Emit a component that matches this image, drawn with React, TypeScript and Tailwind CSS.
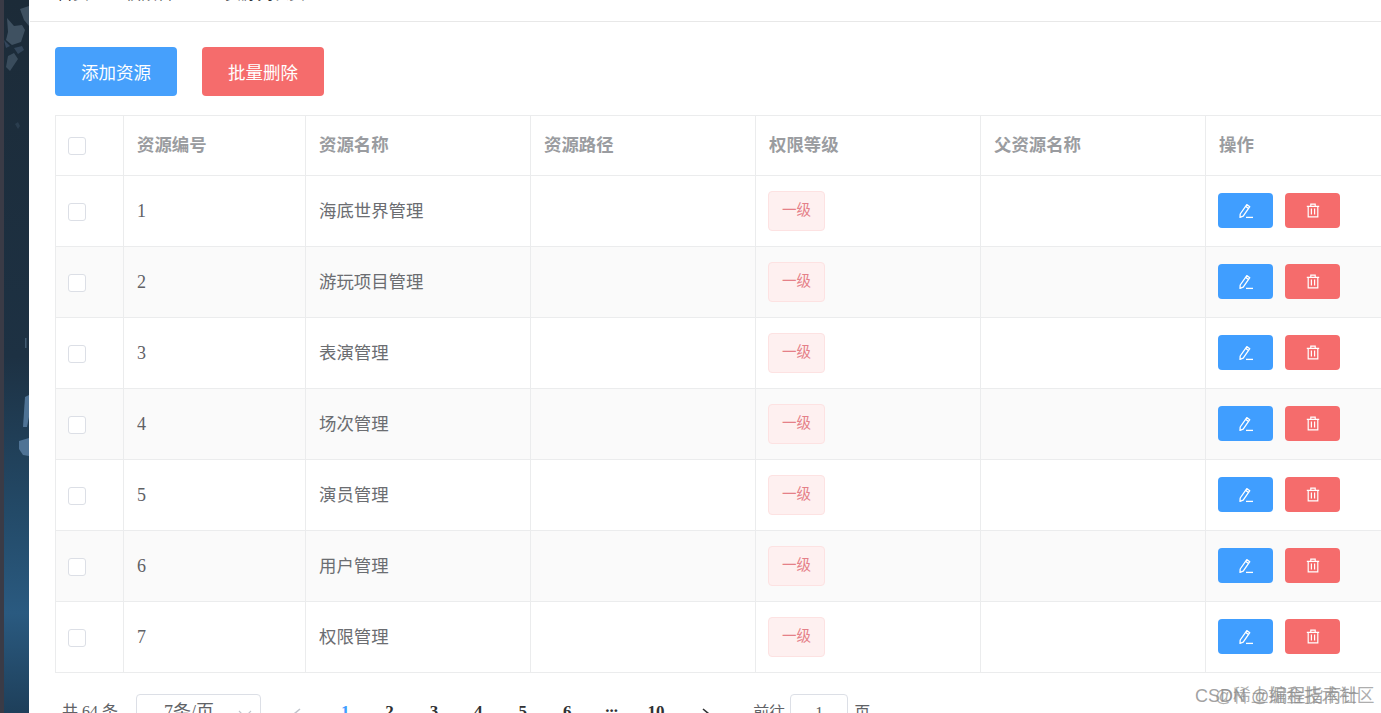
import React from "react";

const CJK = "font-['Liberation_Serif','Noto_Sans_CJK_SC',serif]";
const rows = [
  [1, "海底世界管理"],
  [2, "游玩项目管理"],
  [3, "表演管理"],
  [4, "场次管理"],
  [5, "演员管理"],
  [6, "用户管理"],
  [7, "权限管理"],
] as const;

const cols = ["w-[68px]", "w-[182px]", "w-[225px]", "w-[225px]", "w-[225px]", "w-[225px]", "w-[176px]"];

function Check() {
  return <span className="block w-[18px] h-[18px] rounded-[3px] border border-[#dcdfe6] bg-white" />;
}

function Edit() {
  return (
    <svg width="16" height="16" viewBox="0 0 16 16" fill="none" stroke="#fff" strokeWidth="1.3">
      <path d="M2.2 11 8.8 1.6l3 2.1-6.6 9.5-3.2 1.2z" strokeLinejoin="round" />
      <path d="M7.6 3.4l3 2.1" />
      <path d="M8 14.4h7" />
    </svg>
  );
}

function Trash() {
  return (
    <svg width="14" height="15" viewBox="0 0 14 15" fill="none" stroke="#fff" strokeWidth="1.2">
      <path d="M.8 3.4h12.4M4.8 3.4V1.2h4.4v2.2M2.2 3.4v10.4h9.6V3.4M5.4 5.6v6M8.6 5.6v6" />
    </svg>
  );
}

function Row({ n, name, odd }: { n: number; name: string; odd: boolean }) {
  const cell = "h-full border-r border-[#ebeced] flex items-center shrink-0";
  return (
    <div className={`flex h-[71px] border-b border-[#ebeced] ${odd ? "bg-white" : "bg-[#fafafa]"}`}>
      <div className={`${cell} ${cols[0]} pl-3 pt-px`}><Check /></div>
      <div className={`${cell} ${cols[1]} pl-[13px] text-[#5f6165] text-[18px]`}>{n}</div>
      <div className={`${cell} ${cols[2]} pl-[13px] text-[#6b6d71]`}>{name}</div>
      <div className={`${cell} ${cols[3]}`} />
      <div className={`${cell} ${cols[4]} pl-3`}>
        <span className="w-[57px] h-10 rounded border border-[#fde2e2] bg-[#fef0f0] text-[#e58088] text-[14.5px] flex items-center justify-center">一级</span>
      </div>
      <div className={`${cell} ${cols[5]}`} />
      <div className={`h-full ${cols[6]} shrink-0 pl-3 pb-px flex items-center gap-3`}>
        <span className="w-[55px] h-[35px] rounded bg-[#409eff] flex items-center justify-center"><Edit /></span>
        <span className="w-[55px] h-[35px] rounded bg-[#f56c6c] flex items-center justify-center"><Trash /></span>
      </div>
    </div>
  );
}

function Strip() {
  return (
    <div className="w-[29px] shrink-0 h-full flex">
      <div className="w-1 h-full bg-[#3a3b46]" />
      <svg className="flex-1 h-full" viewBox="0 0 25 713" preserveAspectRatio="none">
        <defs>
          <linearGradient id="g" x1="0" y1="0" x2="0" y2="1">
            <stop offset="0" stopColor="#1c2b38" />
            <stop offset="0.5" stopColor="#1d3143" />
            <stop offset="0.72" stopColor="#234a68" />
            <stop offset="0.86" stopColor="#2a5a80" />
            <stop offset="1" stopColor="#1e3f5a" />
          </linearGradient>
        </defs>
        <rect width="25" height="713" fill="url(#g)" />
        <path d="M16 9l9 -3v20l-5 -6z" fill="#3f5161" />
        <path d="M3 18l7 8 8 -1 3 5 -4 12 -9 3 -6 -5 2 -8z" fill="#3f5161" />
        <path d="M0 40l6 6 -4 2z" fill="#33455a" />
        <path d="M4 56l6 -3 4 6 -8 12 -4 -4z" fill="#3a4c5c" />
        <path d="M10 48l8 -2 2 4 -6 4z" fill="#33465a" />
        <path d="M11 124l3 -2 2 4 -2 3z" fill="#2a3d4e" />
        <path d="M21 397l4 -2v22l-2 10h-4z" fill="#4f7395" />
        <path d="M15 441l10 -3v18l-6 -1 -4 -6z" fill="#4f7395" />
        <path d="M21 338h1.5v10h-1.5z" fill="#415a70" />
      </svg>
    </div>
  );
}

export default function App() {
  return (
    <div className={`w-[1381px] h-[713px] overflow-hidden flex bg-white ${CJK} relative`}>
      <Strip />
      <main className="flex-1 min-w-0 h-full overflow-hidden">
        <div className="h-[22px] border-b border-[#e8e8e8] ml-px pl-[27px] flex items-end text-[16px] text-[#303133] overflow-hidden">
          <span className="mb-[15px] whitespace-nowrap flex">
            <span>首页</span>
            <span className="ml-[36px]">权限管理</span>
            <span className="ml-[36px]">资源列表页</span>
          </span>
        </div>
        <div className="pl-[26px] pt-[25px]">
          <div className="flex gap-[25px] font-['Noto_Sans_CJK_SC','Liberation_Sans',sans-serif] text-[17.5px] text-white">
            <button className="w-[122px] h-[49px] rounded bg-[#46a0fc] pt-px">添加资源</button>
            <button className="w-[122px] h-[49px] rounded bg-[#f56c6c] pt-px">批量删除</button>
          </div>
          <div className="mt-[19px] w-[1400px] border-l border-t border-[#ebeced] text-[17.4px]">
            <div className="flex h-[60px] border-b border-[#ebeced] text-[#9a9ca0] font-bold">
              {["", "资源编号", "资源名称", "资源路径", "权限等级", "父资源名称", "操作"].map((t, i) => (
                <div key={i} className={`${cols[i]} shrink-0 h-full flex items-center ${i === 0 ? "pl-3" : "pl-[13px]"} ${i < 6 ? "border-r border-[#ebeced]" : ""}`}>
                  {i === 0 ? <Check /> : t}
                </div>
              ))}
            </div>
            {rows.map(([n, name], i) => <Row key={n} n={n} name={name} odd={i % 2 === 0} />)}
          </div>
          <div className="mt-[21px] h-10 flex items-center text-[16px] text-[#606266] whitespace-nowrap">
            <span className="ml-[7px] w-[74px] mb-1">共 64 条</span>
            <span className="w-[125px] h-10 rounded border border-[#dcdfe6] flex items-center pl-[27px] relative text-[18px]">
              <span className="mb-[3px]">7条/页</span>
              <svg className="absolute right-[8px] top-[13px]" width="14" height="12" viewBox="0 0 14 12" fill="none" stroke="#c0c4cc" strokeWidth="1.2"><path d="M1 3l6 6 6-6" /></svg>
            </span>
            <svg className="ml-[30px]" width="12" height="14" viewBox="0 0 12 14" fill="none" stroke="#c0c4cc" strokeWidth="1.6"><path d="M9 2 3 7l6 5" /></svg>
            <div className="ml-[20px] flex font-bold text-[#303133] text-[17px] mb-[4px]">
              {["1", "2", "3", "4", "5", "6", "...", "10"].map((p, i) => (
                <span key={p} className={`w-[44.4px] text-center ${i === 0 ? "text-[#409eff]" : ""} ${p === "..." ? "-translate-y-[5px]" : ""}`}>{p}</span>
              ))}
            </div>
            <svg className="ml-[22px]" width="12" height="14" viewBox="0 0 12 14" fill="none" stroke="#303133" strokeWidth="1.6"><path d="M3 2l6 5-6 5" /></svg>
            <span className="ml-[41px] mb-[3px]">前往</span>
            <span className="ml-[5px] w-[58px] h-10 rounded border border-[#dcdfe6] flex items-center justify-center"><span className="mb-[3px]">1</span></span>
            <span className="ml-[6px] mb-[3px]">页</span>
          </div>
        </div>
      </main>
      <div className="absolute left-[1195px] top-[684px] text-[18px] leading-6 text-[#8a8a8a]/80 font-['Liberation_Sans','Noto_Sans_CJK_SC',sans-serif] whitespace-nowrap">CSDN @编程指南针</div>
      <div className="absolute left-[1215px] top-[684px] text-[17.7px] leading-6 text-[#8a8a8a]/70 font-['Liberation_Sans','Noto_Sans_CJK_SC',sans-serif] whitespace-nowrap">@稀土掘金技术社区</div>
    </div>
  );
}
